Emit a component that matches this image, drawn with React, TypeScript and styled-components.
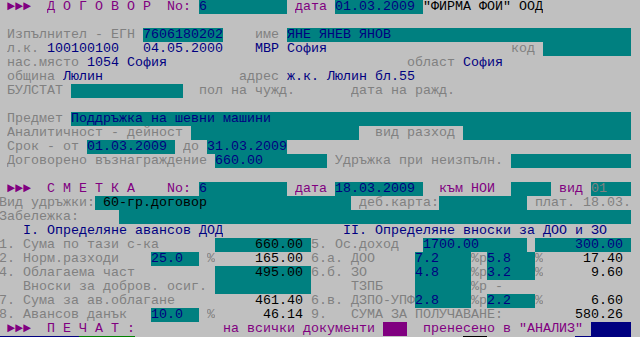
import React from "react";
import styled, { createGlobalStyle } from "styled-components";

const GlobalStyle = createGlobalStyle`
  html, body {
    margin: 0;
    padding: 0;
    overflow: hidden;
    background: #c0c0c0;
  }
`;

const CELL = 8;
const COLS = 80;

type Kind =
  | "lbl"
  | "val"
  | "head"
  | "ink"
  | "fld"
  | "fldk"
  | "fldg"
  | "blkM"
  | "blkB"
  | "blkG"
  | "blkK";

const palette: Record<Kind, { fg: string; bg: string }> = {
  lbl: { fg: "#808080", bg: "transparent" },
  val: { fg: "#000080", bg: "transparent" },
  head: { fg: "#800080", bg: "transparent" },
  ink: { fg: "#000000", bg: "transparent" },
  fld: { fg: "#000080", bg: "#008080" },
  fldk: { fg: "#000000", bg: "#008080" },
  fldg: { fg: "#808080", bg: "#008080" },
  blkM: { fg: "#800080", bg: "#800080" },
  blkB: { fg: "#000080", bg: "#000080" },
  blkG: { fg: "#008000", bg: "#008000" },
  blkK: { fg: "#000000", bg: "#000000" },
};

const Screen = styled.div`
  display: flex;
  flex-direction: column;
  width: ${COLS * CELL}px;
  margin-left: -1px;
  font-family: "Liberation Mono", "DejaVu Sans Mono", monospace;
  font-size: 13.333px;
  line-height: 14px;
`;

const Line = styled.div`
  display: flex;
  height: 14px;
`;

const Cell = styled.span<{ $w: number; $fg: string; $bg: string }>`
  flex: none;
  display: block;
  width: ${(p) => p.$w * CELL}px;
  height: 14px;
  overflow: hidden;
  white-space: pre;
  color: ${(p) => p.$fg};
  background: ${(p) => p.$bg};
`;

type Field = { col: number; text: string; kind: Kind; w: number };

const f = (col: number, text: string, kind: Kind, w?: number): Field => ({
  col,
  text,
  kind,
  w: w ?? text.length,
});

const rows: Field[][] = [
  [
    f(1, "►►►", "head"),
    f(6, "Д О Г О В О Р", "head"),
    f(21, "No:", "head"),
    f(25, "6", "fld", 11),
    f(37, "дата", "head"),
    f(42, "01.03.2009", "fld", 11),
    f(53, '"ФИРМА ФОИ" ООД', "ink"),
  ],
  [],
  [
    f(1, "Изпълнител - ЕГН", "lbl"),
    f(18, "7606180202", "fld", 10),
    f(32, "име", "lbl"),
    f(36, "ЯНЕ ЯНЕВ ЯНОВ", "fld", 43),
  ],
  [
    f(1, "л.к.", "lbl"),
    f(6, "100100100", "val"),
    f(18, "04.05.2000", "val"),
    f(32, "МВР София", "val"),
    f(64, "код", "lbl"),
    f(68, "", "fld", 11),
  ],
  [
    f(1, "нас.място", "lbl"),
    f(11, "1054 София", "val"),
    f(51, "област", "lbl"),
    f(58, "София", "val"),
  ],
  [
    f(1, "община", "lbl"),
    f(8, "Люлин", "val"),
    f(30, "адрес", "lbl"),
    f(36, "ж.к. Люлин бл.55", "val"),
  ],
  [
    f(1, "БУЛСТАТ", "lbl"),
    f(9, "", "fld", 14),
    f(25, "пол на чужд.", "lbl"),
    f(44, "дата на ражд.", "lbl"),
  ],
  [],
  [f(1, "Предмет", "lbl"), f(9, "Поддръжка на шевни машини", "fld", 70)],
  [
    f(1, "Аналитичност - дейност", "lbl"),
    f(24, "", "fld", 21),
    f(47, "вид разход", "lbl"),
    f(58, "", "fld", 21),
  ],
  [
    f(1, "Срок - от", "lbl"),
    f(11, "01.03.2009", "fld", 11),
    f(23, "до", "lbl"),
    f(26, "31.03.2009", "fld", 10),
  ],
  [
    f(1, "Договорено възнаграждение", "lbl"),
    f(27, "660.00", "fld", 14),
    f(42, "Удръжка при неизпълн.", "lbl"),
    f(64, "", "fld", 15),
  ],
  [],
  [
    f(1, "►►►", "head"),
    f(6, "С М Е Т К А", "head"),
    f(21, "No:", "head"),
    f(25, "6", "fld", 11),
    f(37, "дата", "head"),
    f(42, "18.03.2009", "fld", 11),
    f(55, "към НОИ", "head"),
    f(64, "", "fld", 5),
    f(70, "вид", "head"),
    f(74, "01", "fldg", 5),
  ],
  [
    f(0, "Вид удръжки:", "lbl"),
    f(12, " 60-гр.договор", "fldk", 32),
    f(45, "деб.карта:", "lbl"),
    f(55, "", "fld", 11),
    f(67, "плат. 18.03.", "lbl"),
  ],
  [f(0, "Забележка:", "lbl"), f(15, "", "fld", 64)],
  [
    f(3, "I. Определяне авансов ДОД", "val"),
    f(43, "II. Определяне вноски за ДОО и ЗО", "val"),
  ],
  [
    f(0, "1. Сума по тази с-ка", "lbl"),
    f(27, "     660.00", "fldk", 12),
    f(39, "5. Ос.доход", "lbl"),
    f(53, "1700.00", "fld", 13),
    f(67, "     300.00", "fld", 12),
  ],
  [
    f(0, "2. Норм.разходи", "lbl"),
    f(19, "25.0", "fld", 6),
    f(26, "%", "lbl"),
    f(32, "165.00", "ink"),
    f(39, "6.а. ДОО", "lbl"),
    f(52, "7.2", "fld", 7),
    f(59, "%р", "lbl"),
    f(61, "5.8", "fld", 6),
    f(67, "%", "lbl"),
    f(73, "17.40", "ink"),
  ],
  [
    f(0, "4. Облагаема част", "lbl"),
    f(27, "     495.00", "fldk", 12),
    f(39, "6.б. ЗО", "lbl"),
    f(52, "4.8", "fld", 7),
    f(59, "%р", "lbl"),
    f(61, "3.2", "fld", 6),
    f(67, "%", "lbl"),
    f(74, "9.60", "ink"),
  ],
  [
    f(3, "Вноски за добров. осиг.", "lbl"),
    f(27, "", "fld", 12),
    f(44, "ТЗПБ", "lbl"),
    f(52, "", "fld", 7),
    f(59, "%р -", "lbl"),
  ],
  [
    f(0, "7. Сума за ав.облагане", "lbl"),
    f(32, "461.40", "ink"),
    f(39, "6.в. ДЗПО-УПФ", "lbl"),
    f(52, "2.8", "fld", 7),
    f(59, "%р", "lbl"),
    f(61, "2.2", "fld", 6),
    f(67, "%", "lbl"),
    f(74, "6.60", "ink"),
  ],
  [
    f(0, "8. Авансов данък", "lbl"),
    f(19, "10.0", "fld", 6),
    f(26, "%", "lbl"),
    f(33, "46.14", "ink"),
    f(39, "9.", "lbl"),
    f(44, "СУМА ЗА ПОЛУЧАВАНЕ:", "lbl"),
    f(72, "580.26", "ink"),
  ],
  [
    f(1, "►►►", "head"),
    f(6, "П Е Ч А Т :", "head"),
    f(28, "на всички документи", "head"),
    f(48, "", "blkM", 3),
    f(53, 'пренесено в "АНАЛИЗ"', "head"),
    f(74, "", "blkB", 5),
  ],
  // menu bar below, only its top pixel shows
  [
    f(0, "", "blkB", 10),
    f(10, "", "blkG", 7),
    f(58, "", "blkK", 3),
    f(72, "", "blkB", 7),
  ],
];

function Row({ fields }: { fields: Field[] }) {
  const out: React.ReactNode[] = [];
  let at = 0;
  fields.forEach((fd, i) => {
    if (fd.col > at) {
      out.push(<Cell key={`g${i}`} $w={fd.col - at} $fg="transparent" $bg="transparent" />);
    }
    const c = palette[fd.kind];
    out.push(
      <Cell key={i} $w={fd.w} $fg={c.fg} $bg={c.bg}>
        {fd.text}
      </Cell>
    );
    at = fd.col + fd.w;
  });
  return <Line>{out}</Line>;
}

export default function App() {
  return (
    <>
      <GlobalStyle />
      <Screen>
        {rows.map((r, i) => (
          <Row key={i} fields={r} />
        ))}
      </Screen>
    </>
  );
}
